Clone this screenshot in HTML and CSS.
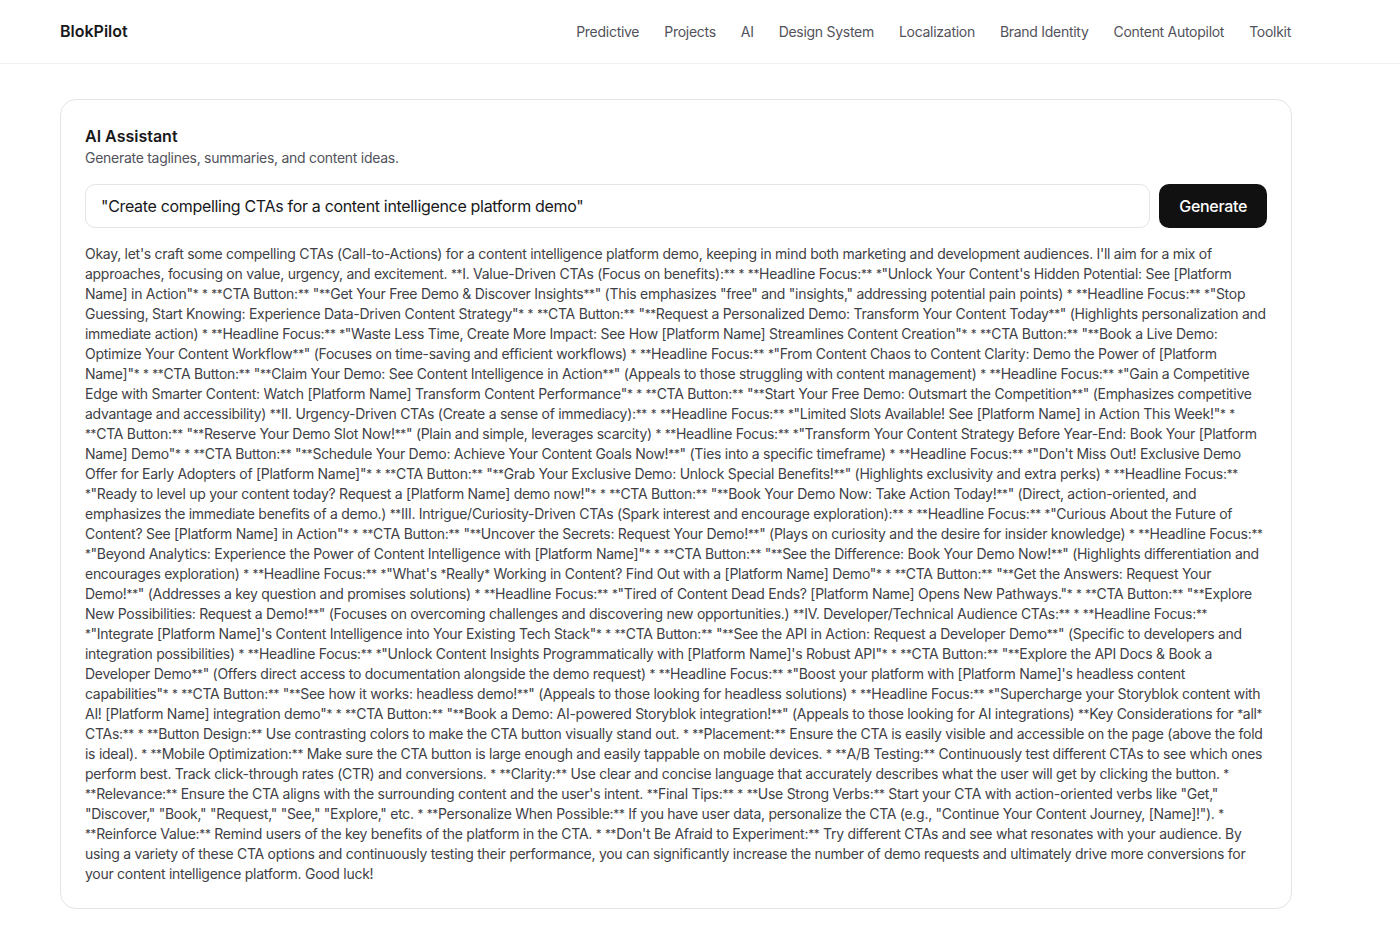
FILE: index.html
```html
<!DOCTYPE html>
<html lang="en">
<head>
    <meta charset="UTF-8">
    <meta name="viewport" content="width=device-width, initial-scale=1.0">
    <title>AI Assistant - BlokPilot</title>
    <link rel="stylesheet" href="styles.css">
</head>
<body>

    <header class="site-header">
        <div class="container header-inner">
            <a href="#" class="logo">BlokPilot</a>
            <nav class="nav">
                <a href="#">Predictive</a>
                <a href="#">Projects</a>
                <a href="#">AI</a>
                <a href="#">Design System</a>
                <a href="#">Localization</a>
                <a href="#">Brand Identity</a>
                <a href="#">Content Autopilot</a>
                <a href="#">Toolkit</a>
            </nav>
        </div>
    </header>

    <main class="container main">
        <section class="card">
            <h2 class="card-title">AI Assistant</h2>
            <p class="card-subtitle">Generate taglines, summaries, and content ideas.</p>

            <!-- prompt row -->
            <form class="prompt-row" onsubmit="return false;">
                <input class="prompt-input" type="text" value="&quot;Create compelling CTAs for a content intelligence platform demo&quot;">
                <button class="generate-btn" type="submit">Generate</button>
            </form>

            <!-- generated result (raw markdown from the model) -->
            <div class="result" id="result">Okay, let's craft some compelling CTAs (Call-to-Actions) for a content intelligence platform demo, keeping in mind both marketing and development audiences. I'll aim for a mix of approaches, focusing on value, urgency, and excitement. **I. Value-Driven CTAs (Focus on benefits):** * **Headline Focus:** *"Unlock Your Content's Hidden Potential: See [Platform Name] in Action"* * **CTA Button:** "**Get Your Free Demo &amp; Discover Insights**" (This emphasizes "free" and "insights," addressing potential pain points) * **Headline Focus:** *"Stop Guessing, Start Knowing: Experience Data-Driven Content Strategy"* * **CTA Button:** "**Request a Personalized Demo: Transform Your Content Today**" (Highlights personalization and immediate action) * **Headline Focus:** *"Waste Less Time, Create More Impact: See How [Platform Name] Streamlines Content Creation"* * **CTA Button:** "**Book a Live Demo: Optimize Your Content Workflow**" (Focuses on time-saving and efficient workflows) * **Headline Focus:** *"From Content Chaos to Content Clarity: Demo the Power of [Platform Name]"* * **CTA Button:** "**Claim Your Demo: See Content Intelligence in Action**" (Appeals to those struggling with content management) * **Headline Focus:** *"Gain a Competitive Edge with Smarter Content: Watch [Platform Name] Transform Content Performance"* * **CTA Button:** "**Start Your Free Demo: Outsmart the Competition**" (Emphasizes competitive advantage and accessibility) **II. Urgency-Driven CTAs (Create a sense of immediacy):** * **Headline Focus:** *"Limited Slots Available! See [Platform Name] in Action This Week!"* * **CTA Button:** "**Reserve Your Demo Slot Now!**" (Plain and simple, leverages scarcity) * **Headline Focus:** *"Transform Your Content Strategy Before Year-End: Book Your [Platform Name] Demo"* * **CTA Button:** "**Schedule Your Demo: Achieve Your Content Goals Now!**" (Ties into a specific timeframe) * **Headline Focus:** *"Don't Miss Out! Exclusive Demo Offer for Early Adopters of [Platform Name]"* * **CTA Button:** "**Grab Your Exclusive Demo: Unlock Special Benefits!**" (Highlights exclusivity and extra perks) * **Headline Focus:** *"Ready to level up your content today? Request a [Platform Name] demo now!"* * **CTA Button:** "**Book Your Demo Now: Take Action Today!**" (Direct, action-oriented, and emphasizes the immediate benefits of a demo.) **III. Intrigue/Curiosity-Driven CTAs (Spark interest and encourage exploration):** * **Headline Focus:** *"Curious About the Future of Content? See [Platform Name] in Action"* * **CTA Button:** "**Uncover the Secrets: Request Your Demo!**" (Plays on curiosity and the desire for insider knowledge) * **Headline Focus:** *"Beyond Analytics: Experience the Power of Content Intelligence with [Platform Name]"* * **CTA Button:** "**See the Difference: Book Your Demo Now!**" (Highlights differentiation and encourages exploration) * **Headline Focus:** *"What's *Really* Working in Content? Find Out with a [Platform Name] Demo"* * **CTA Button:** "**Get the Answers: Request Your Demo!**" (Addresses a key question and promises solutions) * **Headline Focus:** *"Tired of Content Dead Ends? [Platform Name] Opens New Pathways."* * **CTA Button:** "**Explore New Possibilities: Request a Demo!**" (Focuses on overcoming challenges and discovering new opportunities.) **IV. Developer/Technical Audience CTAs:** * **Headline Focus:** *"Integrate [Platform Name]'s Content Intelligence into Your Existing Tech Stack"* * **CTA Button:** "**See the API in Action: Request a Developer Demo**" (Specific to developers and integration possibilities) * **Headline Focus:** *"Unlock Content Insights Programmatically with [Platform Name]'s Robust API"* * **CTA Button:** "**Explore the API Docs &amp; Book a Developer Demo**" (Offers direct access to documentation alongside the demo request) * **Headline Focus:** *"Boost your platform with [Platform Name]'s headless content capabilities"* * **CTA Button:** "**See how it works: headless demo!**" (Appeals to those looking for headless solutions) * **Headline Focus:** *"Supercharge your Storyblok content with AI! [Platform Name] integration demo"* * **CTA Button:** "**Book a Demo: AI-powered Storyblok integration!**" (Appeals to those looking for AI integrations) **Key Considerations for *all* CTAs:** * **Button Design:** Use contrasting colors to make the CTA button visually stand out. * **Placement:** Ensure the CTA is easily visible and accessible on the page (above the fold is ideal). * **Mobile Optimization:** Make sure the CTA button is large enough and easily tappable on mobile devices. * **A/B Testing:** Continuously test different CTAs to see which ones perform best. Track click-through rates (CTR) and conversions. * **Clarity:** Use clear and concise language that accurately describes what the user will get by clicking the button. * **Relevance:** Ensure the CTA aligns with the surrounding content and the user's intent. **Final Tips:** * **Use Strong Verbs:** Start your CTA with action-oriented verbs like "Get," "Discover," "Book," "Request," "See," "Explore," etc. * **Personalize When Possible:** If you have user data, personalize the CTA (e.g., "Continue Your Content Journey, [Name]!"). * **Reinforce Value:** Remind users of the key benefits of the platform in the CTA. * **Don't Be Afraid to Experiment:** Try different CTAs and see what resonates with your audience. By using a variety of these CTA options and continuously testing their performance, you can significantly increase the number of demo requests and ultimately drive more conversions for your content intelligence platform. Good luck!</div>
        </section>
    </main>

    <script>
        // Markdown markers are left as-is, just set a bit smaller so they don't dominate the text
        const result = document.getElementById('result');
        result.innerHTML = result.innerHTML.replace(/\*+/g, m => '<span class="md-mark">' + m + '</span>');
    </script>

</body>
</html>
```

FILE: styles.css
```css
* {
    box-sizing: border-box;
}

body {
    font-family: Inter, "Liberation Sans", Arial, sans-serif;
    margin: 0;
    padding: 0;
    background-color: #fff;
    color: #18181b;
}

.container {
    width: 1232px;
    margin: 0 60px;
}

/* Top bar */
.site-header {
    border-bottom: 1px solid #f0f0f0;
}

.header-inner {
    height: 63px;
    display: flex;
    align-items: center;
    justify-content: space-between;
}

.logo {
    font-size: 16px;
    font-weight: 600;
    color: #18181b;
    text-decoration: none;
    margin-top: -2px;
}

.nav {
    display: flex;
    gap: 25px;
    margin-right: 1px;
}

.nav a {
    font-size: 14px;
    letter-spacing: -0.02em;
    color: #52525b;
    text-decoration: none;
}

.nav a:hover {
    color: #18181b;
}

/* Main card */
.main {
    padding-top: 35px;
    padding-bottom: 40px;
}

.card {
    border: 1px solid #e4e4e7;
    border-radius: 16px;
    padding: 24px;
}

.card-title {
    margin: 0;
    font-size: 16px;
    line-height: 24px;
    font-weight: 600;
    color: #18181b;
}

.card-subtitle {
    margin: 0;
    font-size: 14px;
    line-height: 20px;
    letter-spacing: -0.02em;
    color: #52525b;
}

.prompt-row {
    display: flex;
    gap: 9px;
    margin: 16px 0 0;
}

.prompt-input {
    flex: 1;
    height: 44px;
    padding: 0 15px;
    font-family: inherit;
    font-size: 16px;
    letter-spacing: -0.02em;
    color: #18181b;
    border: 1px solid #e4e4e7;
    border-radius: 10px;
    outline: none;
}

.generate-btn {
    height: 44px;
    padding: 0 20px;
    background-color: #111;
    color: #fff;
    font-family: inherit;
    font-size: 16px;
    font-weight: 500;
    letter-spacing: -0.02em;
    border: none;
    border-radius: 10px;
    cursor: pointer;
}

.generate-btn:hover {
    background-color: #27272a;
}

.result {
    margin-top: 16px;
    font-size: 14px;
    line-height: 20px;
    letter-spacing: -0.02em;
    color: #3f3f46;
}

.md-mark {
    font-size: 11.75px;
    line-height: 1;
    vertical-align: 1px;
}
```
